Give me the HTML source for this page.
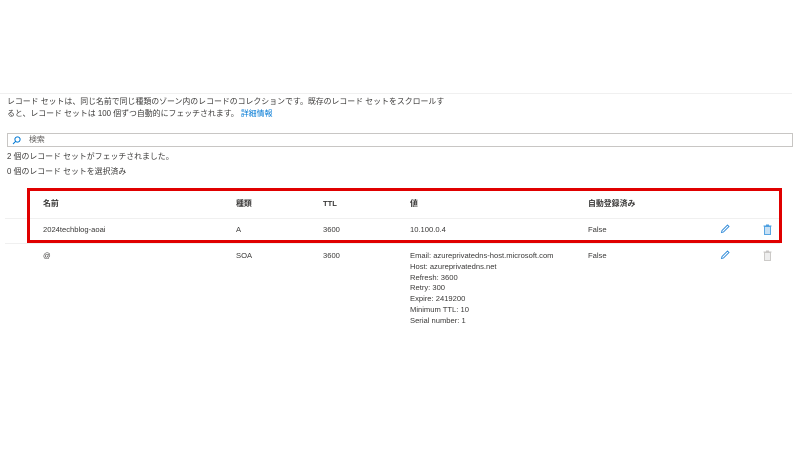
<!DOCTYPE html>
<html><head><meta charset="utf-8"><style>
*{margin:0;padding:0;box-sizing:border-box}
body{width:800px;height:450px;background:#fff;position:relative;overflow:hidden;font-family:"Liberation Sans","Noto Sans CJK JP",sans-serif;color:#3b3a39;font-size:7.6px}
.a{position:absolute;white-space:nowrap;line-height:10px}
.j{font-size:7.9px}
.hl{position:absolute;height:1px;background:#f0f0f0}
.h{font-weight:bold}
</style></head><body>
<div class="hl" style="left:0;top:93px;width:792px"></div>
<div class="a j" style="left:7px;top:97px">レコード セットは、同じ名前で同じ種類のゾーン内のレコードのコレクションです。既存のレコード セットをスクロールす</div>
<div class="a j" style="left:7px;top:109px">ると、レコード セットは 100 個ずつ自動的にフェッチされます。 <span style="color:#0078d4">詳細情報</span></div>
<div style="position:absolute;left:7px;top:133px;width:786px;height:14px;border:1px solid #c8c6c4"></div>
<svg style="position:absolute;left:12px;top:136px" width="9" height="9" viewBox="0 0 9 9"><circle cx="5.5" cy="3.5" r="2.6" fill="none" stroke="#0078d4" stroke-width="1"/><line x1="3.6" y1="5.4" x2="1" y2="8" stroke="#0078d4" stroke-width="1"/></svg>
<div class="a j" style="left:29px;top:135px;color:#605e5c">検索</div>
<div class="a j" style="left:7px;top:152px">2 個のレコード セットがフェッチされました。</div>
<div class="a j" style="left:7px;top:167px">0 個のレコード セットを選択済み</div>

<div class="hl" style="left:5px;top:218px;width:775px"></div>
<div class="hl" style="left:5px;top:243px;width:775px"></div>

<div class="a h j" style="left:43px;top:199px">名前</div>
<div class="a h j" style="left:236px;top:199px">種類</div>
<div class="a h" style="left:323px;top:199px">TTL</div>
<div class="a h j" style="left:410px;top:199px">値</div>
<div class="a h j" style="left:588px;top:199px">自動登録済み</div>

<div class="a" style="left:43px;top:225px">2024techblog-aoai</div>
<div class="a" style="left:236px;top:225px">A</div>
<div class="a" style="left:323px;top:225px">3600</div>
<div class="a" style="left:410px;top:225px">10.100.0.4</div>
<div class="a" style="left:588px;top:225px">False</div>

<div class="a" style="left:43px;top:251px">@</div>
<div class="a" style="left:236px;top:251px">SOA</div>
<div class="a" style="left:323px;top:251px">3600</div>
<div class="a" style="left:410px;top:251px;line-height:10.8px">Email: azureprivatedns-host.microsoft.com<br>Host: azureprivatedns.net<br>Refresh: 3600<br>Retry: 300<br>Expire: 2419200<br>Minimum TTL: 10<br>Serial number: 1</div>
<div class="a" style="left:588px;top:251px">False</div>

<svg style="position:absolute;left:720px;top:224px" width="10" height="10" viewBox="0 0 10 10"><path d="M1.5 8.5 L2 6.5 L7.5 1 L9 2.5 L3.5 8 Z" fill="none" stroke="#2b88d8" stroke-width="0.9"/></svg>
<svg style="position:absolute;left:720px;top:250px" width="10" height="10" viewBox="0 0 10 10"><path d="M1.5 8.5 L2 6.5 L7.5 1 L9 2.5 L3.5 8 Z" fill="none" stroke="#2b88d8" stroke-width="0.9"/></svg>
<svg style="position:absolute;left:763px;top:224px" width="9" height="11" viewBox="0 0 9 11"><rect x="1.5" y="2.5" width="6" height="8" fill="#c7e0f4" stroke="#4a9ee0" stroke-width="0.9"/><line x1="0.5" y1="2" x2="8.5" y2="2" stroke="#4a9ee0"/><rect x="3" y="0.5" width="3" height="1.5" fill="#4a9ee0"/></svg>
<svg style="position:absolute;left:763px;top:250px" width="9" height="11" viewBox="0 0 9 11"><rect x="1.5" y="2.5" width="6" height="8" fill="#eee" stroke="#c8c6c4" stroke-width="0.9"/><line x1="0.5" y1="2" x2="8.5" y2="2" stroke="#c8c6c4"/><rect x="3" y="0.5" width="3" height="1.5" fill="#c8c6c4"/></svg>

<div style="position:absolute;left:27px;top:188px;width:755px;height:55px;border:3px solid #e00000"></div>
</body></html>
